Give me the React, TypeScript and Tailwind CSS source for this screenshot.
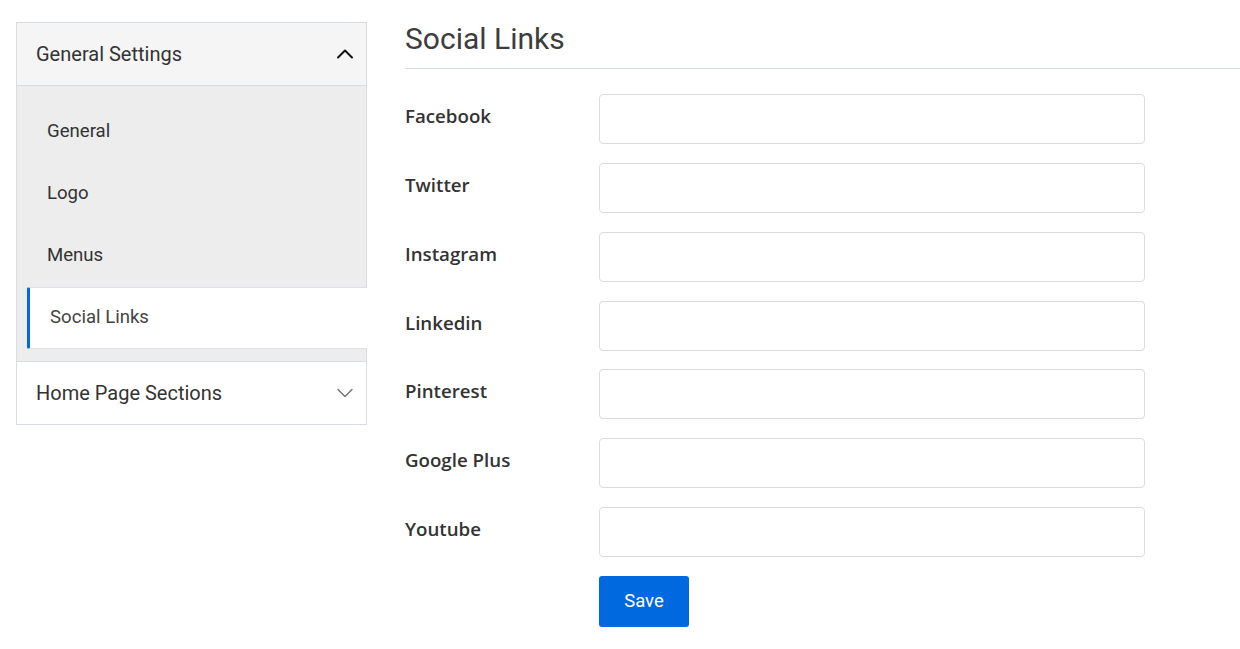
import { ChevronDown, ChevronUp } from "lucide-react";

const fields = ["Facebook", "Twitter", "Instagram", "Linkedin", "Pinterest", "Google Plus", "Youtube"];
const subItems = ["General", "Logo", "Menus"];

function Sidebar() {
  return (
    <aside className="w-[351px] shrink-0 self-start border border-[#d8dce3] font-['Roboto',sans-serif] text-[#333]">
      <div className="flex h-[63px] items-center justify-between border-b border-[#d8dce3] bg-[#f5f5f5] pl-[19px] pr-[7px] text-[20px]">
        <span>General Settings</span>
        <ChevronUp size={28} strokeWidth={1.7} className="text-[#111]" />
      </div>
      <div className="bg-[#ededed] pt-[15px] pb-[12px] pl-[10px]">
        {subItems.map((s) => (
          <div key={s} className="flex h-[62px] items-center pl-[20px] text-[18.6px]">
            {s}
          </div>
        ))}
        <div className="-mr-px flex h-[62px] items-center rounded-l-[2px] border-y border-l-[3px] border-y-[#dde1e6] border-l-[#0068e2] bg-white pl-[20px] text-[18.6px] text-[#444]">
          Social Links
        </div>
      </div>
      <div className="flex h-[63px] items-center justify-between border-t border-[#d8dce3] bg-white pl-[19px] pr-[7px] text-[20px]">
        <span>Home Page Sections</span>
        <ChevronDown size={28} strokeWidth={1.3} className="text-[#777]" />
      </div>
    </aside>
  );
}

export default function App() {
  return (
    <div className="flex min-h-[649px] bg-white pl-[16px] pt-[22px]">
      <Sidebar />
      <main className="ml-[38px] flex-1">
        <h2 className="border-b border-[#d5d9e0] pb-[12px] font-['Roboto',sans-serif] text-[30px] leading-[34px] text-[#3d3d3d]">
          Social Links
        </h2>
        <form className="mt-[25px] flex flex-col gap-[18.85px]" onSubmit={(e) => e.preventDefault()}>
          {fields.map((f) => (
            <div key={f} className="flex items-start">
              <label className="w-[194px] shrink-0 pt-[8px] font-['Open_Sans',sans-serif] text-[18.7px] font-semibold leading-[28px] text-[#333]">
                {f}
              </label>
              <input
                type="text"
                className="h-[50px] w-[546px] rounded-[4px] border border-[#dcdcdc] bg-white px-3 outline-none"
              />
            </div>
          ))}
          <div className="pl-[194px]">
            <button
              type="submit"
              className="h-[51px] w-[90px] rounded-[3px] bg-[#0069e0] font-['Roboto',sans-serif] text-[18.5px] text-white"
            >
              Save
            </button>
          </div>
        </form>
      </main>
    </div>
  );
}
